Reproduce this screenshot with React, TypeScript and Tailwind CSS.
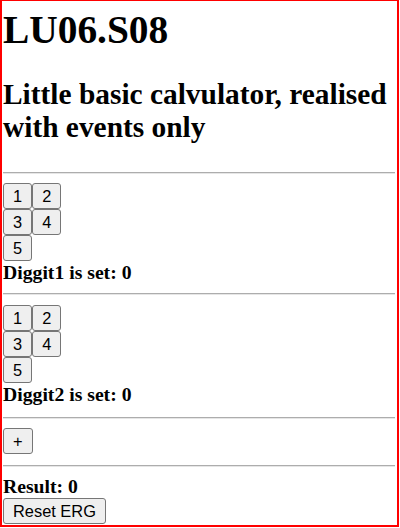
import React from "react";

const btn =
  "h-[26px] px-[9px] bg-[#efefef] border border-[#767676] rounded-[3px] text-[16.4px] leading-none text-black font-['Liberation_Sans',Arial,sans-serif]";

function DigitPad() {
  return (
    <div className="flex flex-col items-start">
      <div className="flex">
        <button className={btn}>1</button>
        <button className={btn}>2</button>
      </div>
      <div className="flex">
        <button className={btn}>3</button>
        <button className={btn}>4</button>
      </div>
      <div className="flex">
        <button className={btn}>5</button>
      </div>
    </div>
  );
}

function Rule({ className }: { className: string }) {
  return <hr className={`h-[2px] border-t border-b border-t-[#adadad] border-b-[#e6e6e6] ${className}`} />;
}

export default function App() {
  return (
    <div className="w-[399px] h-[527px] bg-white border-t border-x-2 border-b-2 border-[#ff0000] overflow-hidden">
      <div className="flex flex-col pl-[1px] pr-[2px] text-black font-['Liberation_Serif','Times_New_Roman',serif]">
        {/* Title */}
        <h1 className="mt-[7px] text-[39.4px] leading-[44px] font-bold">LU06.S08</h1>
        <h2 className="mt-[26px] text-[29.4px] leading-[33px] font-bold">
          Little basic calvulator, realised with events only
        </h2>

        {/* Digit 1 */}
        <Rule className="mt-[28px]" />
        <div className="mt-[9px]">
          <DigitPad />
        </div>
        <b className="text-[19.7px] leading-[22px]">Diggit1 is set: 0</b>

        {/* Digit 2 */}
        <Rule className="mt-[10px]" />
        <div className="mt-[10px]">
          <DigitPad />
        </div>
        <b className="text-[19.7px] leading-[22px]">Diggit2 is set: 0</b>

        {/* Operator */}
        <Rule className="mt-[12px]" />
        <div className="mt-[9px] flex">
          <button className={btn}>+</button>
        </div>

        {/* Result */}
        <Rule className="mt-[11px]" />
        <b className="mt-[8px] text-[19.7px] leading-[22px]">Result: 0</b>
        <div className="mt-[1px] flex">
          <button className={btn}>Reset ERG</button>
        </div>
      </div>
    </div>
  );
}
